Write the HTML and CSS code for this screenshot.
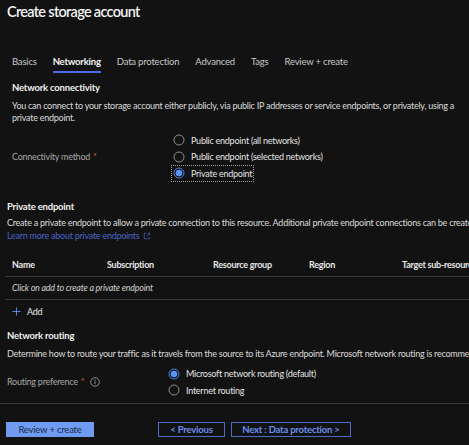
FILE: index.html
```html
<!DOCTYPE html>
<html lang="en">
<head>
  <meta charset="UTF-8">
  <title>Create storage account</title>
  <link rel="stylesheet" href="styles.css">
</head>
<body>
  <div class="page">
    <h1 class="title">Create storage account</h1>

    <div class="tabs">
      <span class="tab">Basics</span>
      <span class="tab active">Networking</span>
      <span class="tab">Data protection</span>
      <span class="tab">Advanced</span>
      <span class="tab">Tags</span>
      <span class="tab">Review + create</span>
    </div>

    <div class="indent">
      <h3 class="section-title first">Network connectivity</h3>
      <p class="intro">You can connect to your storage account either publicly, via public IP addresses or service endpoints, or privately, using a private endpoint.</p>

      <div class="form-row connectivity">
        <div class="field-label">Connectivity method <span class="req">*</span></div>
        <div class="options">
          <div class="option">
            <svg class="radio" viewBox="0 0 12 12"><circle cx="6" cy="6" r="5" fill="none" stroke="#8c8c8c" stroke-width="1"/></svg>
            <span>Public endpoint (all networks)</span>
          </div>
          <div class="option">
            <svg class="radio" viewBox="0 0 12 12"><circle cx="6" cy="6" r="5" fill="none" stroke="#8c8c8c" stroke-width="1"/></svg>
            <span>Public endpoint (selected networks)</span>
          </div>
          <div class="option focused">
            <svg class="radio" viewBox="0 0 12 12"><circle cx="6" cy="6" r="5" fill="none" stroke="#4c7fe0" stroke-width="1"/><circle cx="6" cy="6" r="3.3" fill="#5b93f5"/></svg>
            <span>Private endpoint</span>
          </div>
        </div>
      </div>
    </div>

    <h3 class="section-title pe">Private endpoint</h3>
    <p class="desc">Create a private endpoint to allow a private connection to this resource. Additional private endpoint connections can be created within the storage account or private link center.<br>
      <a class="link" href="#">Learn more about private endpoints
        <svg class="ext" viewBox="0 0 10 10"><path d="M4 1.5H1.5v7h7V6M6 1.5h2.5V4M8.5 1.5L4.5 5.5" fill="none" stroke="#4a63c8" stroke-width="0.9"/></svg>
      </a>
    </p>

    <table class="grid">
      <thead>
        <tr>
          <th class="c-name">Name</th>
          <th class="c-sub">Subscription</th>
          <th class="c-rg">Resource group</th>
          <th class="c-region">Region</th>
          <th>Target sub-resource</th>
        </tr>
      </thead>
      <tbody>
        <tr>
          <td colspan="5" class="empty">Click on add to create a private endpoint</td>
        </tr>
      </tbody>
    </table>

    <div class="add">
      <svg class="plus" viewBox="0 0 10 10"><path d="M5 0.5v9M0.5 5h9" stroke="#5b8ef0" stroke-width="1"/></svg>
      <span>Add</span>
    </div>

    <h3 class="section-title nr">Network routing</h3>
    <p class="desc single">Determine how to route your traffic as it travels from the source to its Azure endpoint. Microsoft network routing is recommended for most customers.</p>

    <div class="form-row routing">
      <div class="field-label">Routing preference <span class="req">*</span>
        <svg class="info" viewBox="0 0 10 10"><circle cx="5" cy="5" r="4.3" fill="none" stroke="#a8a8a8" stroke-width="0.8"/><path d="M5 4.3v3" stroke="#a8a8a8" stroke-width="0.9"/><circle cx="5" cy="2.9" r="0.55" fill="#a8a8a8"/></svg>
      </div>
      <div class="options">
        <div class="option">
          <svg class="radio" viewBox="0 0 12 12"><circle cx="6" cy="6" r="5" fill="none" stroke="#4c7fe0" stroke-width="1"/><circle cx="6" cy="6" r="3.3" fill="#5b93f5"/></svg>
          <span>Microsoft network routing (default)</span>
        </div>
        <div class="option">
          <svg class="radio" viewBox="0 0 12 12"><circle cx="6" cy="6" r="5" fill="none" stroke="#8c8c8c" stroke-width="1"/></svg>
          <span>Internet routing</span>
        </div>
      </div>
    </div>
  </div>

  <div class="footer">
    <button class="btn primary">Review + create</button>
    <button class="btn secondary prev">&lt; Previous</button>
    <button class="btn secondary next">Next : Data protection &gt;</button>
  </div>
</body>
</html>
```

FILE: styles.css
```css
html, body {
  margin: 0;
  padding: 0;
  background: #121212;
  overflow: hidden;
}
body {
  font-family: Lato, "Open Sans", sans-serif;
  font-size: 9px;
  letter-spacing: -0.25px;
  color: #dcdcdc;
  width: 469px;
  height: 445px;
}
.page {
  width: 640px;
}
.title {
  margin: 0;
  padding: 3px 0 0 7px;
  font-size: 14.5px;
  line-height: 18px;
  font-weight: 600;
  color: #f4f4f4;
  letter-spacing: -0.7px;
}
.tabs {
  display: flex;
  gap: 16px;
  margin-top: 34px;
  padding-left: 12px;
}
.tab {
  font-size: 9.5px;
  letter-spacing: -0.2px;
  line-height: 14px;
  padding-bottom: 2px;
  border-bottom: 2px solid transparent;
  color: #c8c8c8;
}
.tab.active {
  color: #f2f2f2;
  font-weight: 700;
  border-bottom-color: #4f6bed;
}
.indent {
  padding-left: 12px;
}
.section-title {
  margin: 0;
  font-size: 9.5px;
  letter-spacing: -0.2px;
  line-height: 14px;
  font-weight: 700;
  color: #f0f0f0;
}
.section-title.first {
  margin-top: 8px;
}
.intro {
  margin: 5px 0 0;
  line-height: 12px;
  width: 452px;
}
.form-row {
  display: grid;
  grid-template-columns: 161px 1fr;
}
.connectivity {
  margin-top: 8px;
}
.field-label {
  color: #a6a6a6;
  line-height: 16px;
  display: flex;
  align-items: center;
  gap: 3px;
}
.req {
  color: #e0523e;
}
.info {
  width: 10px;
  height: 10px;
  margin-left: 3px;
}
.options {
  display: flex;
  flex-direction: column;
}
.option {
  display: flex;
  align-items: center;
  gap: 6px;
  height: 16.5px;
  color: #e4e4e4;
  align-self: flex-start;
  padding: 0 2px 0 0;
  box-sizing: border-box;
}
.option.focused {
  outline: 1px dotted #a0a0a0;
  outline-offset: -1px;
  margin-left: -2px;
  padding-left: 2px;
}
.radio {
  width: 12px;
  height: 12px;
  flex: none;
}
.section-title.pe {
  margin-top: 18px;
  padding-left: 7px;
}
.desc {
  margin: 2px 0 0;
  padding-left: 7px;
  line-height: 13px;
  white-space: nowrap;
}
.link {
  color: #4a63c8;
  text-decoration: none;
}
.ext {
  width: 8px;
  height: 8px;
  vertical-align: -1px;
  margin-left: 2px;
}
.grid {
  margin-top: 12px;
  margin-left: 5px;
  width: 600px;
  border-collapse: collapse;
}
.grid th {
  text-align: left;
  font-weight: 700;
  color: #e8e8e8;
  height: 22px;
  padding: 0 0 0 7px;
  border-bottom: 1px solid #3a3a3a;
}
.grid .c-name { width: 88px; }
.grid .c-sub { width: 99px; }
.grid .c-rg { width: 89px; }
.grid .c-region { width: 86px; }
.grid td {
  height: 22px;
  padding: 0 0 0 7px;
  border-bottom: 1px solid #3a3a3a;
}
.empty {
  font-style: italic;
  color: #d0d0d0;
}
.add {
  display: flex;
  align-items: center;
  gap: 6px;
  margin-top: 4px;
  padding-left: 12px;
  line-height: 16px;
  color: #e8e8e8;
}
.plus {
  width: 9px;
  height: 9px;
}
.section-title.nr {
  margin-top: 9px;
  padding-left: 7px;
}
.desc.single {
  margin-top: 5px;
  line-height: 12px;
}
.routing {
  margin-top: 6px;
  padding-left: 7px;
}
.footer {
  margin-top: 4px;
  border-top: 1px solid #3b3b3b;
  padding: 18px 0 0 6px;
  display: flex;
}
.btn {
  font-family: Lato, "Open Sans", sans-serif;
  font-size: 9.5px;
  letter-spacing: -0.2px;
  height: 15px;
  padding: 0;
  cursor: pointer;
  box-sizing: border-box;
}
.primary {
  width: 88px;
  background: #6f9bf2;
  border: none;
  color: #1d2a47;
}
.secondary {
  background: transparent;
  border: 1px solid #4f6bc8;
  color: #6b8ff0;
  font-weight: 700;
}
.prev {
  width: 67px;
  margin-left: 64px;
}
.next {
  width: 120px;
  margin-left: 6px;
}
```
